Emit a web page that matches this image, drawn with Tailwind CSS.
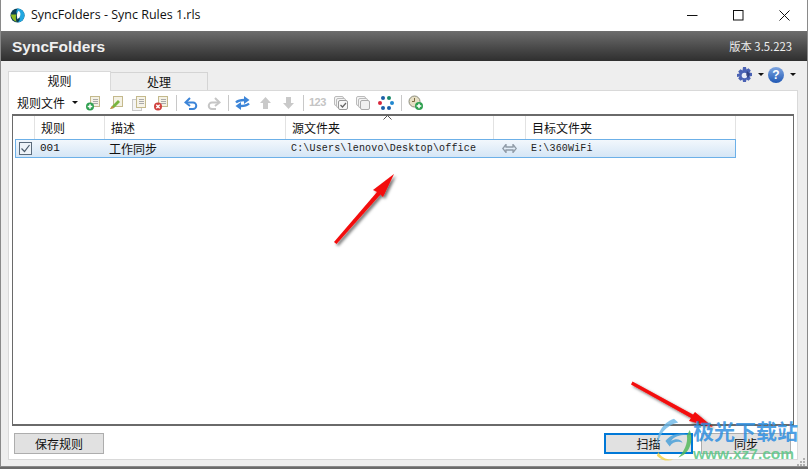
<!DOCTYPE html>
<html lang="zh">
<head>
<meta charset="utf-8">
<script src="https://cdn.jsdelivr.net/npm/@tailwindcss/browser@4"></script>
</head>
<body class="w-[808px] h-[469px] overflow-hidden bg-[#6b6b6b] relative font-['Noto_Sans_CJK_SC','Noto_Sans',sans-serif] text-[12px] text-[#111]">
<div class="h-[467px] flex flex-col border-x border-b border-[#8a8a8a] bg-[#eeeeee]">
  <!-- Title bar -->
  <div class="h-[31px] shrink-0 bg-white flex items-center pl-[9px]">
    <svg width="15" height="15" viewBox="0 0 16 16">
      <circle cx="8" cy="8" r="7.5" fill="#0d3f55"/>
      <path d="M8 .5a7.5 7.5 0 0 1 0 15c3-2 3-5 1-7S6 4 8 .5z" fill="#22a7e0"/>
      <path d="M9 3c2 1 3 4 1 7l-2 2c-1-3-1-6 1-9z" fill="#fff"/>
      <path d="M1 7c0 3 2 6 6 8-1-3-1-6 0-8z" fill="#8dbb25"/>
    </svg>
    <span class="ml-[6px] text-[12.5px] text-[#111] font-['Open_Sans','Noto_Sans',sans-serif]">SyncFolders - Sync Rules 1.rls</span>
    <div class="ml-auto flex items-center h-full">
      <div class="w-[46px] h-full flex items-center justify-center"><svg width="11" height="11" viewBox="0 0 11 11"><path d="M0 5.500H10.500" stroke="#111" fill="none"/></svg></div>
      <div class="w-[46px] h-full flex items-center justify-center"><svg width="11" height="11" viewBox="0 0 11 11"><rect x=".5" y=".5" width="9.500" height="9.500" stroke="#111" fill="none"/></svg></div>
      <div class="w-[46px] h-full flex items-center justify-center"><svg width="11" height="11" viewBox="0 0 11 11"><path d="M.5.500l10 10M10.500.500l-10 10" stroke="#111" fill="none"/></svg></div>
    </div>
  </div>
  <!-- Brand bar -->
  <div class="h-[30px] shrink-0 bg-gradient-to-b from-[#6e6e6e] to-[#2f2f2f] flex items-center justify-between pl-[11px] pr-[15px]">
    <span class="text-[15.5px] font-bold text-[#f0f0f0] font-['Liberation_Sans',sans-serif] pt-[1px]">SyncFolders</span>
    <span class="text-[11.3px] text-[#eeeeee]">版本 3.5.223</span>
  </div>
  <!-- Body -->
  <div class="flex-1 min-h-0 flex flex-col pl-[7px] pr-[9px] pb-[6px] pt-[9px]">
    <div class="h-[20px] shrink-0 flex items-end relative">
      <div class="w-[103px] h-[20px] pb-[2px] bg-white border border-b-0 border-[#d9d9d9] flex items-center justify-center relative z-10 -mb-px">规则</div>
      <div class="w-[97px] h-[18px] bg-[#eeeeee] border border-l-0 border-b-0 border-[#d4d4d4] flex items-center justify-center">处理</div>
      <div class="ml-auto h-[18px] self-start -mt-[4px] flex items-center pr-[2px]">
        <svg width="17" height="17" viewBox="0 0 17 17">
          <path d="M7 0h3l.5 2.500 2-1.300 2.300 2.300-1.300 2 2.500.5v3l-2.500.5 1.300 2-2.300 2.300-2-1.300-.5 2.500H7l-.5-2.500-2 1.300-2.300-2.300 1.300-2L1 10V7l2.500-.5-1.300-2 2.300-2.300 2 1.300z" fill="#4a62b4"/>
          <circle cx="8.500" cy="8.500" r="2.800" fill="#e8ecf8"/>
          <path d="M11 4l3 3-2 4-2-3z" fill="#26336e" opacity=".7"/>
        </svg>
        <svg width="6" height="4" viewBox="0 0 6 4" class="ml-[5px]"><path d="M0 0h6L3 3z" fill="#111"/></svg>
        <div class="w-[16px] h-[16px] rounded-full bg-gradient-to-b from-[#7fa6e0] to-[#1f58b4] text-white text-[12px] font-bold flex items-center justify-center font-['Liberation_Sans',sans-serif] ml-[4px]">?</div>
        <svg width="6" height="4" viewBox="0 0 6 4" class="ml-[6px]"><path d="M0 0h6L3 3z" fill="#111"/></svg>
      </div>
    </div>
    <div class="flex-1 min-h-0 bg-white border border-[#d9d9d9] flex flex-col px-[3px]">
      <!-- Toolbar -->
      <div class="h-[23px] shrink-0 flex items-center pl-[5px] relative">
        <span class="w-[50px] shrink-0">规则文件</span>
        <svg width="6" height="4" viewBox="0 0 6 4" class="ml-[5px] shrink-0"><path d="M0 0h6L3 3z" fill="#111"/></svg>
        <!-- new -->
        <svg width="16" height="16" viewBox="0 0 16 16" class="ml-[7px] shrink-0"><rect x="5.500" y="1.500" width="9" height="10" fill="#f4f1e4" stroke="#c4b98c"/><path d="M8 4.500h5M8 6.500h5M8 8.500h5" stroke="#aaa"/><circle cx="5" cy="11.500" r="4" fill="#2fa050"/><path d="M5 9.200v4.600M2.700 11.500h4.600" stroke="#fff" stroke-width="1.500"/></svg>
        <!-- edit -->
        <svg width="16" height="16" viewBox="0 0 16 16" class="ml-[7px] shrink-0"><rect x="5.500" y="1.500" width="9" height="10" fill="#f4f1e4" stroke="#c4b98c"/><path d="M2 14l2-3 6-6 2 2-6 6z" fill="#79b63f"/><path d="M2 14l2-3 2 2z" fill="#d2884a"/></svg>
        <!-- copy -->
        <svg width="16" height="16" viewBox="0 0 16 16" class="ml-[7px] shrink-0"><rect x="1.500" y="4.500" width="9" height="11" fill="#f4f4f4" stroke="#c8c8c8"/><rect x="5.500" y="1.500" width="9" height="11" fill="#f6f3e8" stroke="#c4b98c"/><path d="M8 4.500h5M8 6.500h5M8 8.500h5" stroke="#aaa"/></svg>
        <!-- delete -->
        <svg width="16" height="16" viewBox="0 0 16 16" class="ml-[6px] shrink-0"><rect x="5.500" y="1.500" width="9" height="10" fill="#f4f1e4" stroke="#c4b98c"/><path d="M8 4.500h5M8 6.500h5M8 8.500h5" stroke="#aaa"/><circle cx="5" cy="11.500" r="4" fill="#d0403c"/><path d="M3.300 9.800l3.400 3.400M6.700 9.800l-3.400 3.400" stroke="#fff" stroke-width="1.400"/></svg>
        <div class="w-px h-[16px] bg-[#c8c8c8] ml-[7px] shrink-0"></div>
        <!-- undo -->
        <svg width="14" height="14" viewBox="0 0 14 14" class="ml-[7px] shrink-0"><path d="M3 6.500h6a3.200 3.200 0 0 1 0 6.500H5" fill="none" stroke="#3d85d8" stroke-width="2"/><path d="M6 2L1.500 6.500 6 10" fill="none" stroke="#3d85d8" stroke-width="2"/></svg>
        <!-- redo -->
        <svg width="14" height="14" viewBox="0 0 14 14" class="ml-[9px] shrink-0"><path d="M11 6.500H5a3.200 3.200 0 0 0 0 6.500h4" fill="none" stroke="#c6c6c6" stroke-width="2"/><path d="M8 2l4.500 4.500L8 10" fill="none" stroke="#c6c6c6" stroke-width="2"/></svg>
        <div class="w-px h-[16px] bg-[#c8c8c8] ml-[7px] shrink-0"></div>
        <!-- swap -->
        <svg width="15" height="14" viewBox="0 0 15 14" class="ml-[6px] shrink-0"><path d="M1 6.500C3 4.500 5 4 9.500 4" fill="none" stroke="#3d85d8" stroke-width="2.400"/><path d="M9 0l5.500 4L9 8z" fill="#3d85d8"/><path d="M14 7.500C12 9.500 10 10 5.500 10" fill="none" stroke="#3d85d8" stroke-width="2.400"/><path d="M6 6L.5 10 6 14z" fill="#3d85d8"/></svg>
        <!-- up -->
        <svg width="13" height="14" viewBox="0 0 13 14" class="ml-[9px] shrink-0"><path d="M6.500 1L12 7H9v6H4V7H1z" fill="#c9c9c9"/></svg>
        <!-- down -->
        <svg width="13" height="14" viewBox="0 0 13 14" class="ml-[10px] shrink-0"><path d="M6.500 13L12 7H9V1H4v6H1z" fill="#c9c9c9"/></svg>
        <div class="w-px h-[16px] bg-[#c8c8c8] ml-[8px] shrink-0"></div>
        <span class="ml-[5px] w-[17px] shrink-0 text-[11px] font-bold tracking-[-0.5px] text-[#c4c4c4] font-['Liberation_Sans',sans-serif]">123</span>
        <!-- checked copies -->
        <svg width="16" height="16" viewBox="0 0 16 16" class="ml-[7px] shrink-0"><rect x="1.500" y="1.500" width="9" height="9" rx="1.500" fill="#f4f4f4" stroke="#bbb"/><rect x="3.500" y="3.500" width="9" height="9" rx="1.500" fill="#f4f4f4" stroke="#bbb"/><rect x="5.500" y="5.500" width="9" height="9" rx="1.500" fill="#f8f8f8" stroke="#999"/><path d="M7.500 10l2 2 3.500-4" fill="none" stroke="#666" stroke-width="1.200"/></svg>
        <svg width="16" height="16" viewBox="0 0 16 16" class="ml-[6px] shrink-0"><rect x="1.500" y="1.500" width="9" height="9" rx="1.500" fill="#f4f4f4" stroke="#bbb"/><rect x="3.500" y="3.500" width="9" height="9" rx="1.500" fill="#f4f4f4" stroke="#bbb"/><rect x="5.500" y="5.500" width="9" height="9" rx="1.500" fill="#f0f0f0" stroke="#aaa"/></svg>
        <!-- dots -->
        <svg width="18" height="16" viewBox="0 0 18 16" class="ml-[6px] shrink-0"><circle cx="6" cy="3" r="2" fill="#1c5fa8"/><circle cx="12" cy="3" r="2" fill="#1a8a6a"/><circle cx="3" cy="8" r="2" fill="#d8263c"/><circle cx="15" cy="8" r="2" fill="#2288d0"/><circle cx="6" cy="13" r="2" fill="#1c5fa8"/><circle cx="12" cy="13" r="2" fill="#1c5fa8"/></svg>
        <div class="w-px h-[16px] bg-[#c8c8c8] ml-[6px] shrink-0"></div>
        <!-- clock add -->
        <svg width="16" height="16" viewBox="0 0 16 16" class="ml-[6px] shrink-0"><circle cx="6.500" cy="6.500" r="5.500" fill="#e6dfc5" stroke="#8a8a7a"/><path d="M6.500 3v3.500H4" fill="none" stroke="#7a6a40"/><circle cx="11" cy="11" r="4" fill="#2fa050"/><path d="M11 8.700v4.600M8.700 11h4.600" stroke="#fff" stroke-width="1.500"/></svg>
      </div>
      <!-- List -->
      <div class="flex-1 min-h-0 border-x border-y-2 border-[#6a6a6a] relative bg-white">
        <div class="h-[23px] flex w-[724px] text-[12px]">
          <div class="w-[22px] border-r border-[#e2e2e2]"></div>
          <div class="w-[70px] border-r border-[#e2e2e2] flex items-center pl-[6px]">规则</div>
          <div class="w-[181px] border-r border-[#e2e2e2] flex items-center pl-[6px]">描述</div>
          <div class="w-[208px] border-r border-[#e2e2e2] flex items-center pl-[6px] relative">源文件夹
            <svg width="9" height="5" viewBox="0 0 9 5" class="absolute left-[97px] -top-[1px]"><path d="M.5 4.500l4-4 4 4" fill="none" stroke="#555"/></svg>
          </div>
          <div class="w-[32px] border-r border-[#e2e2e2]"></div>
          <div class="w-[210px] border-r border-[#e2e2e2] flex items-center pl-[6px]">目标文件夹</div>
        </div>
        <div class="ml-[2px] w-[721px] h-[19px] border border-[#6cb0e8] bg-gradient-to-b from-[#f2f7fc] to-[#d5e6f6] flex items-center text-[#111]">
          <div class="w-[18px] flex items-center justify-center">
            <svg width="13" height="13" viewBox="0 0 13 13"><rect x=".5" y=".5" width="12" height="12" fill="#eef3f8" stroke="#5a6a7a"/><path d="M2.500 6.500l3 3 5-6.500" fill="none" stroke="#4a5a6a" stroke-width="1.200"/></svg>
          </div>
          <div class="w-[70px] pl-[6px] text-[11px] font-['Liberation_Mono',monospace]">001</div>
          <div class="w-[181px] pl-[5px]">工作同步</div>
          <div class="w-[208px] pl-[6px] text-[10px] tracking-[0.17px] text-[#222] font-['Liberation_Mono',monospace]">C:\Users\lenovo\Desktop\office</div>
          <div class="w-[32px] flex justify-center">
            <svg width="15" height="9" viewBox="0 0 15 9"><path d="M4 .5L.8 4.500 4 8.500V6h7v2.500l3.200-4L11 .5V3H4z" fill="none" stroke="#8f9aa6" stroke-width="1.300"/></svg>
          </div>
          <div class="pl-[6px] text-[10px] tracking-[0.17px] text-[#222] font-['Liberation_Mono',monospace]">E:\360WiFi</div>
        </div>
      </div>
      <!-- Bottom -->
      <div class="h-[33px] shrink-0 flex items-start pl-[2px] pr-[3px] pt-[7px]">
        <button class="w-[90px] h-[21px] bg-[#e1e1e1] border border-[#adadad] flex items-center justify-center">保存规则</button>
        <button class="ml-auto w-[89px] h-[21px] bg-[#e1e1e1] border-2 border-[#0078d7] flex items-center justify-center">扫描</button>
        <button class="ml-[8px] w-[90px] h-[21px] bg-[#e1e1e1] border border-[#adadad] flex items-center justify-center">同步</button>
      </div>
    </div>
  </div>
</div>
<!-- Annotation arrows -->
<svg class="absolute left-0 top-0 pointer-events-none" width="808" height="469" viewBox="0 0 808 469">
  <defs>
    <filter id="s" x="-30%" y="-30%" width="160%" height="160%"><feDropShadow dx="2" dy="2" stdDeviation="1.500" flood-color="#000" flood-opacity=".55"/></filter>
  </defs>
  <g filter="url(#s)" fill="#f30a0a">
    <path d="M334 242L377 192L373 190L394 174L383 197L380.500 194.500L336.500 244Z"/>
    <path d="M632.500 381.500L693 414.500L695 412L713 427L689 421L691 418L631 384.500Z"/>
  </g>
  <!-- resize grip -->
  <g fill="#b0b0b0"><rect x="803" y="458" width="2" height="2"/><rect x="800" y="461" width="2" height="2"/><rect x="803" y="461" width="2" height="2"/><rect x="797" y="464" width="2" height="2"/><rect x="800" y="464" width="2" height="2"/><rect x="803" y="464" width="2" height="2"/></g>
</svg>
<!-- Watermark -->
<div class="absolute left-[654px] top-[417px] w-[154px] h-[50px] pointer-events-none">
  <svg class="absolute left-0 top-0" width="40" height="46" viewBox="0 0 56 50" preserveAspectRatio="none">
    <path d="M28 2C12 6 2 20 4 34c2-14 12-25 30-28z" fill="#6cb6e6" opacity=".8"/>
    <path d="M16 26c8-8 24-10 34-6-10-1-20 0-26 6 6-3 14-2 16 2-6-2-14-1-18 4-2-2-4-4-6-6z" fill="#4aa0d8" opacity=".85"/>
    <path d="M50 14c6 12 0 26-16 30 8-6 14-16 12-24z" fill="#55b85a" opacity=".85"/>
    <path d="M6 38c4 6 12 9 22 8-8 3-18 1-24-4z" fill="#f0d040" opacity=".8"/>
  </svg>
  <div class="absolute left-[39px] top-[0px] text-[21px] leading-[26px] font-bold text-[#2f8fe0]/85 whitespace-nowrap">极光下载站</div>
  <div class="absolute left-[39px] top-[28px] text-[15.5px] leading-[18px] font-bold text-[#5fc88a]/90 font-['Liberation_Sans',sans-serif] whitespace-nowrap">www.xz7.com</div>
</div>
</body>
</html>
